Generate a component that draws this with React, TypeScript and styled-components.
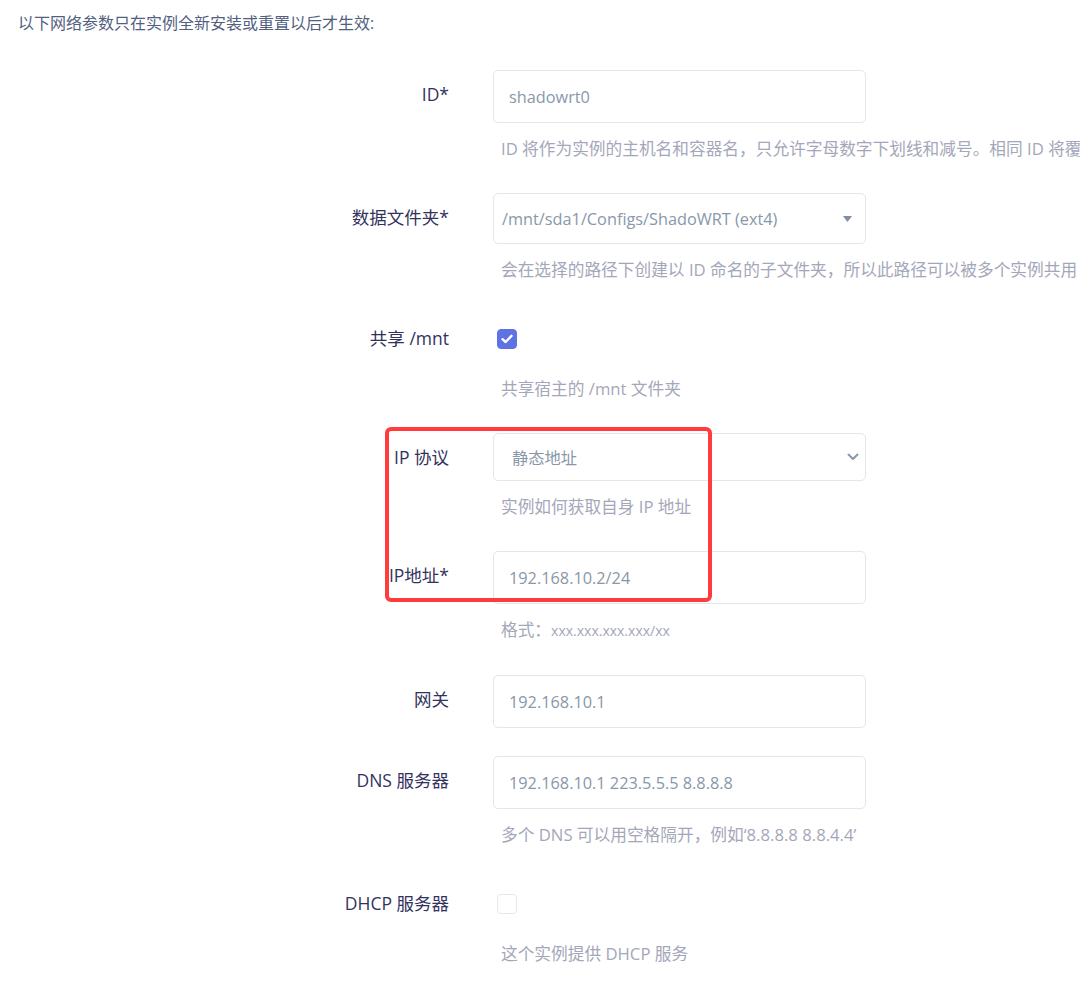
import React from "react";
import styled, { createGlobalStyle } from "styled-components";

const GlobalStyle = createGlobalStyle`
  html, body {
    margin: 0;
    padding: 0;
    background: #ffffff;
    overflow-x: hidden;
  }
  body {
    font-family: "Open Sans", "Noto Sans CJK SC", sans-serif;
    -webkit-font-smoothing: antialiased;
  }
`;

const Page = styled.div`
  position: relative;
  width: 1080px;
  min-height: 989px;
  overflow: hidden;
`;

const Notice = styled.div`
  padding: 12px 0 0 18px;
  height: 70px;
  box-sizing: border-box;
  font-size: 16px;
  line-height: 22px;
  color: #525f7f;
`;

const Form = styled.div`
  display: flex;
  flex-direction: column;
`;

const Field = styled.div<{ $hasHelp?: boolean }>`
  display: grid;
  grid-template-columns: 449px 373px;
  column-gap: 44px;
  margin-bottom: ${(p) => (p.$hasHelp ? 34 : 28)}px;
`;

const Label = styled.div`
  text-align: right;
  padding-top: 11px;
  font-size: 17.5px;
  line-height: 26px;
  color: #32325d;
  white-space: nowrap;
`;

const Control = styled.div`
  display: flex;
  flex-direction: column;
  min-width: 0;
`;

const TextBox = styled.div<{ $h: number }>`
  position: relative;
  box-sizing: border-box;
  height: ${(p) => p.$h}px;
  border: 1px solid #e3e6ee;
  border-radius: 5px;
  background: #fff;
  display: flex;
  align-items: center;
  padding: 0 40px 0 ${(p) => (p.$h < 52 ? 8 : 15)}px;
  font-size: 16.3px;
  color: #8898aa;
  white-space: nowrap;
`;

const SelectText = styled.span<{ $indent?: number }>`
  padding-left: ${(p) => p.$indent ?? 0}px;
`;

const ArrowSlot = styled.span<{ $right: number }>`
  position: absolute;
  right: ${(p) => p.$right}px;
  top: 50%;
  transform: translateY(-50%);
  display: flex;
  align-items: center;
`;

const CheckRow = styled.div`
  height: 49px;
  box-sizing: border-box;
  padding: 15px 0 0 4px;
`;

const Check = styled.div<{ $on?: boolean }>`
  width: 20px;
  height: 20px;
  box-sizing: border-box;
  border-radius: 4px;
  background: ${(p) => (p.$on ? "#5e72e4" : "#fff")};
  border: 1px solid ${(p) => (p.$on ? "#5e72e4" : "#e6e8ef")};
  display: flex;
  align-items: center;
  justify-content: center;
`;

const Help = styled.div`
  margin: 16px 0 0 8px;
  font-size: 16.7px;
  line-height: 20px;
  color: #a4a7b9;
  white-space: nowrap;
`;

const Small = styled.span`
  font-size: 14px;
`;

const Highlight = styled.div`
  position: absolute;
  left: 385px;
  top: 427px;
  width: 327px;
  height: 175px;
  box-sizing: border-box;
  border: 4px solid #ff3b3b;
  border-radius: 6px;
  pointer-events: none;
`;

const Triangle = () => (
  <svg width="9" height="6" viewBox="0 0 9 6">
    <path d="M0 0 L9 0 L4.5 6 Z" fill="#7f8ea3" />
  </svg>
);

const Chevron = () => (
  <svg width="12" height="8" viewBox="0 0 12 8">
    <path d="M1.5 1.5 L6 6 L10.5 1.5" stroke="#8d97a8" strokeWidth="2" fill="none" strokeLinecap="round" strokeLinejoin="round" />
  </svg>
);

const Tick = () => (
  <svg width="12" height="10" viewBox="0 0 12 10">
    <path d="M1.5 5.2 L4.6 8 L10.5 1.8" stroke="#fff" strokeWidth="2.4" fill="none" strokeLinecap="round" strokeLinejoin="round" />
  </svg>
);

export default function App() {
  return (
    <>
      <GlobalStyle />
      <Page>
        <Notice>以下网络参数只在实例全新安装或重置以后才生效:</Notice>
        <Form>
          <Field $hasHelp>
            <Label>ID*</Label>
            <Control>
              <TextBox $h={53}>shadowrt0</TextBox>
              <Help>ID 将作为实例的主机名和容器名，只允许字母数字下划线和减号。相同 ID 将覆盖已有实例</Help>
            </Control>
          </Field>
          <Field $hasHelp>
            <Label>数据文件夹*</Label>
            <Control>
              <TextBox $h={51}>
                <SelectText>/mnt/sda1/Configs/ShadoWRT (ext4)</SelectText>
                <ArrowSlot $right={13}>
                  <Triangle />
                </ArrowSlot>
              </TextBox>
              <Help>会在选择的路径下创建以 ID 命名的子文件夹，所以此路径可以被多个实例共用</Help>
            </Control>
          </Field>
          <Field $hasHelp>
            <Label>共享 /mnt</Label>
            <Control>
              <CheckRow>
                <Check $on>
                  <Tick />
                </Check>
              </CheckRow>
              <Help>共享宿主的 /mnt 文件夹</Help>
            </Control>
          </Field>
          <Field $hasHelp>
            <Label>IP 协议</Label>
            <Control>
              <TextBox $h={48}>
                <SelectText $indent={10}>静态地址</SelectText>
                <ArrowSlot $right={6}>
                  <Chevron />
                </ArrowSlot>
              </TextBox>
              <Help>实例如何获取自身 IP 地址</Help>
            </Control>
          </Field>
          <Field $hasHelp>
            <Label>IP地址*</Label>
            <Control>
              <TextBox $h={53}>192.168.10.2/24</TextBox>
              <Help>
                格式：<Small>xxx.xxx.xxx.xxx/xx</Small>
              </Help>
            </Control>
          </Field>
          <Field>
            <Label>网关</Label>
            <Control>
              <TextBox $h={53}>192.168.10.1</TextBox>
            </Control>
          </Field>
          <Field $hasHelp>
            <Label>DNS 服务器</Label>
            <Control>
              <TextBox $h={53}>192.168.10.1 223.5.5.5 8.8.8.8</TextBox>
              <Help>多个 DNS 可以用空格隔开，例如‘8.8.8.8 8.8.4.4’</Help>
            </Control>
          </Field>
          <Field $hasHelp>
            <Label>DHCP 服务器</Label>
            <Control>
              <CheckRow>
                <Check />
              </CheckRow>
              <Help>这个实例提供 DHCP 服务</Help>
            </Control>
          </Field>
        </Form>
        <Highlight />
      </Page>
    </>
  );
}
